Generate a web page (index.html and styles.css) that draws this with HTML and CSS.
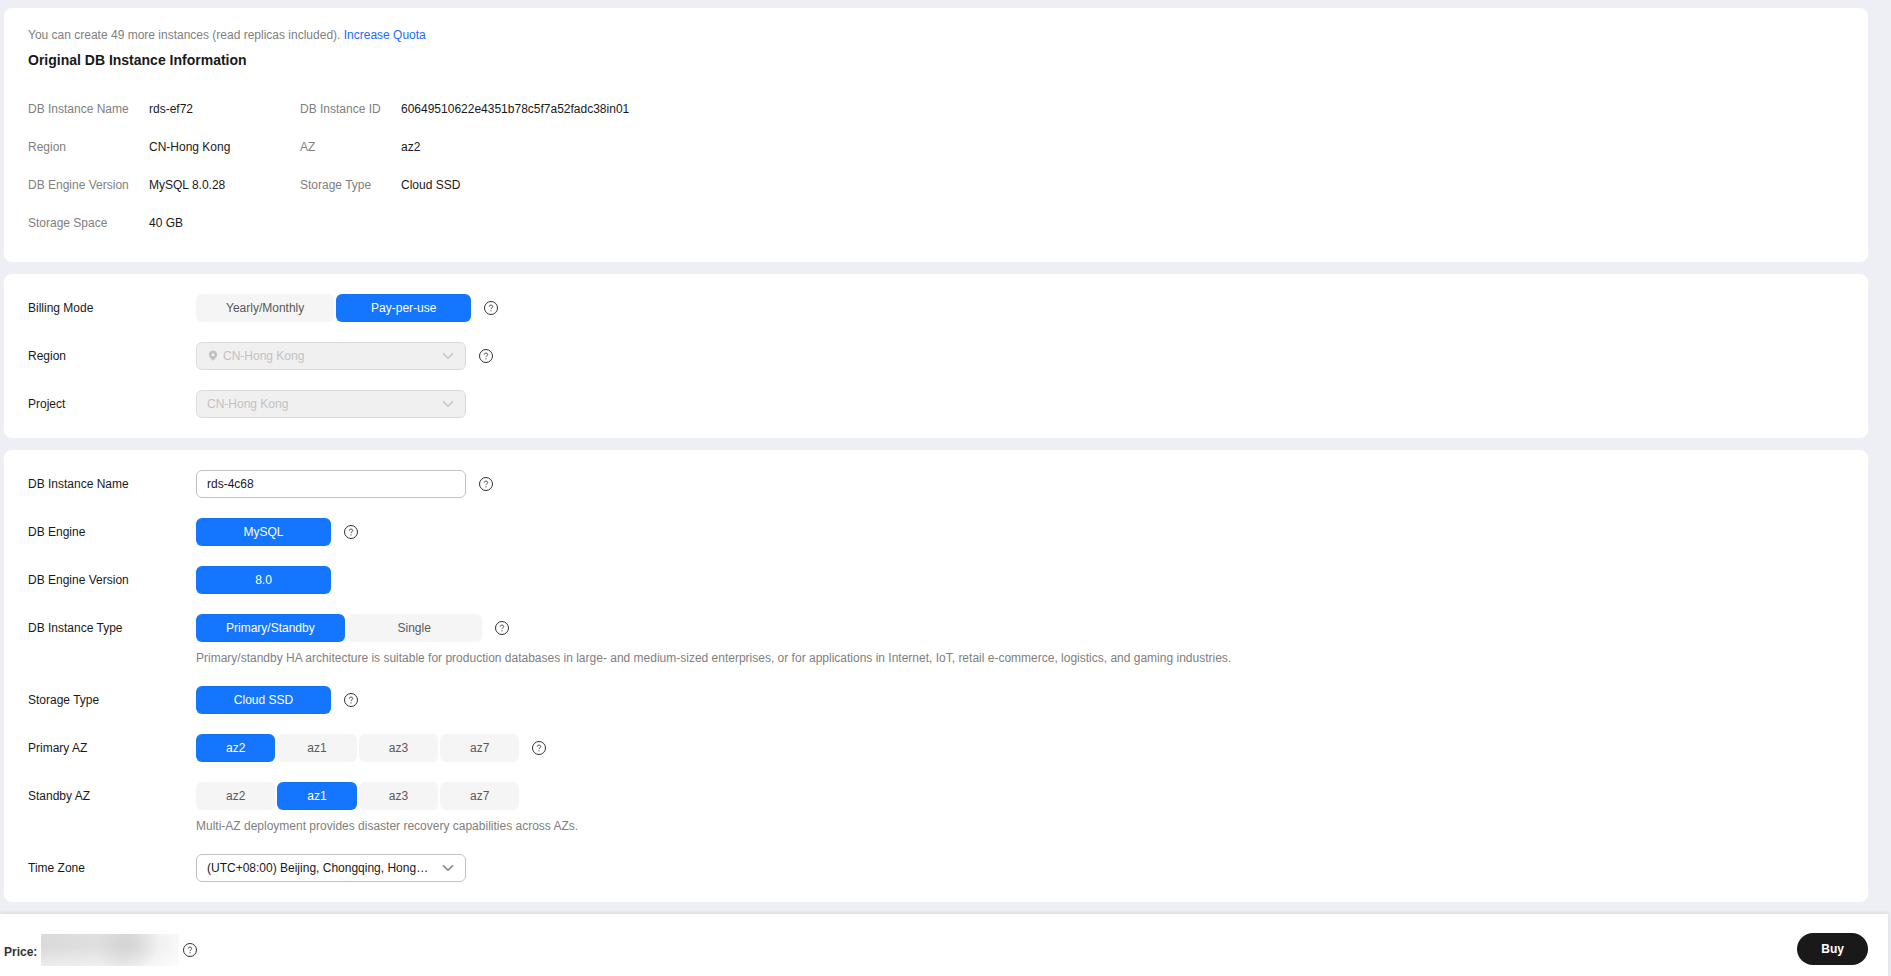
FILE: index.html
```html
<!DOCTYPE html>
<html lang="en">
  <head>
    <meta charset="UTF-8" />
    <meta name="viewport" content="width=device-width, initial-scale=1.0" />
    <title>Create Read Replica</title>
    <link rel="stylesheet" href="styles.css">
  </head>
  <body>
    <svg class="sprite" width="0" height="0" aria-hidden="true">
      <symbol id="icon-help" viewBox="0 0 14 14">
        <circle cx="7" cy="7" r="6.5" fill="none" stroke="currentColor" />
        <path d="M5.3 5.6C5.3 4.6 6 4.100 7 4.100s1.700.5 1.700 1.500c0 1.200-1.700 1.200-1.700 2.500" fill="none" stroke="currentColor" stroke-width="0.9" />
        <circle cx="7" cy="9.800" r="0.6" fill="currentColor" />
      </symbol>
      <symbol id="icon-arrow" viewBox="0 0 12 8">
        <path d="M1 1.2l5 5 5-5" fill="none" stroke="currentColor" stroke-width="1.5" />
      </symbol>
      <symbol id="icon-pin" viewBox="0 0 10 12">
        <path fill="currentColor" fill-rule="evenodd" d="M5 .6A4.2 4.2 0 0 0 .8 4.800C.8 7.300 3.500 9.500 5 10.800c1.500-1.300 4.200-3.500 4.200-6A4.200 4.200 0 0 0 5 .6zM5 3.300a1.500 1.500 0 1 1 0 3 1.500 1.500 0 0 1 0-3z" />
      </symbol>
    </svg>
    <main>
      <section class="card info">
        <p class="quota">You can create 49 more instances (read replicas included). <a href="#">Increase Quota</a></p>
        <h2>Original DB Instance Information</h2>
        <dl class="info-list">
          <dt>DB Instance Name</dt>
          <dd>rds-ef72</dd>
          <dt>DB Instance ID</dt>
          <dd>60649510622e4351b78c5f7a52fadc38in01</dd>
          <dt>Region</dt>
          <dd>CN-Hong Kong</dd>
          <dt>AZ</dt>
          <dd>az2</dd>
          <dt>DB Engine Version</dt>
          <dd>MySQL 8.0.28</dd>
          <dt>Storage Type</dt>
          <dd>Cloud SSD</dd>
          <dt>Storage Space</dt>
          <dd>40 GB</dd>
        </dl>
      </section>

      <section class="card form">
        <div class="form-row">
          <span class="label" id="billing-label">Billing Mode</span>
          <div class="control">
            <div class="options" role="group" aria-labelledby="billing-label">
              <button type="button" class="option">Yearly/Monthly</button>
              <button type="button" class="option active" aria-pressed="true">Pay-per-use</button>
            </div>
            <svg class="help"><use href="#icon-help" /></svg>
          </div>
        </div>
        <div class="form-row">
          <label class="label" for="region">Region</label>
          <div class="control">
            <div class="select with-pin">
              <svg class="pin"><use href="#icon-pin" /></svg>
              <select id="region" disabled>
                <option>CN-Hong Kong</option>
              </select>
              <svg class="arrow"><use href="#icon-arrow" /></svg>
            </div>
            <svg class="help"><use href="#icon-help" /></svg>
          </div>
        </div>
        <div class="form-row">
          <label class="label" for="project">Project</label>
          <div class="control">
            <div class="select">
              <select id="project" disabled>
                <option>CN-Hong Kong</option>
              </select>
              <svg class="arrow"><use href="#icon-arrow" /></svg>
            </div>
          </div>
        </div>
      </section>

      <section class="card form">
        <div class="form-row">
          <label class="label" for="name">DB Instance Name</label>
          <div class="control">
            <input type="text" id="name" name="name" value="rds-4c68" />
            <svg class="help"><use href="#icon-help" /></svg>
          </div>
        </div>
        <div class="form-row">
          <span class="label" id="engine-label">DB Engine</span>
          <div class="control">
            <div class="options" role="group" aria-labelledby="engine-label">
              <button type="button" class="option active" aria-pressed="true">MySQL</button>
            </div>
            <svg class="help"><use href="#icon-help" /></svg>
          </div>
        </div>
        <div class="form-row">
          <span class="label" id="version-label">DB Engine Version</span>
          <div class="control">
            <div class="options" role="group" aria-labelledby="version-label">
              <button type="button" class="option active" aria-pressed="true">8.0</button>
            </div>
          </div>
        </div>
        <div class="form-row">
          <span class="label" id="type-label">DB Instance Type</span>
          <div class="control">
            <div class="options" role="group" aria-labelledby="type-label">
              <button type="button" class="option active" aria-pressed="true">Primary/Standby</button>
              <button type="button" class="option">Single</button>
            </div>
            <svg class="help"><use href="#icon-help" /></svg>
          </div>
          <p class="hint">Primary/standby HA architecture is suitable for production databases in large- and medium-sized enterprises, or for applications in Internet, IoT, retail e-commerce, logistics, and gaming industries.</p>
        </div>
        <div class="form-row">
          <span class="label" id="storage-label">Storage Type</span>
          <div class="control">
            <div class="options" role="group" aria-labelledby="storage-label">
              <button type="button" class="option active" aria-pressed="true">Cloud SSD</button>
            </div>
            <svg class="help"><use href="#icon-help" /></svg>
          </div>
        </div>
        <div class="form-row">
          <span class="label" id="primary-label">Primary AZ</span>
          <div class="control">
            <div class="options small" role="group" aria-labelledby="primary-label">
              <button type="button" class="option active" aria-pressed="true">az2</button>
              <button type="button" class="option">az1</button>
              <button type="button" class="option">az3</button>
              <button type="button" class="option">az7</button>
            </div>
            <svg class="help"><use href="#icon-help" /></svg>
          </div>
        </div>
        <div class="form-row">
          <span class="label" id="standby-label">Standby AZ</span>
          <div class="control">
            <div class="options small" role="group" aria-labelledby="standby-label">
              <button type="button" class="option">az2</button>
              <button type="button" class="option active" aria-pressed="true">az1</button>
              <button type="button" class="option">az3</button>
              <button type="button" class="option">az7</button>
            </div>
          </div>
          <p class="hint">Multi-AZ deployment provides disaster recovery capabilities across AZs.</p>
        </div>
        <div class="form-row">
          <label class="label" for="timezone">Time Zone</label>
          <div class="control">
            <div class="select">
              <select id="timezone">
                <option>(UTC+08:00) Beijing, Chongqing, Hong Kong, Urumqi</option>
              </select>
              <svg class="arrow"><use href="#icon-arrow" /></svg>
            </div>
          </div>
        </div>
      </section>
    </main>

    <footer>
      <div class="price">
        <span class="price-label">Price:</span>
        <span class="price-value"></span>
        <svg class="help"><use href="#icon-help" /></svg>
      </div>
      <button type="button" class="buy-btn">Buy</button>
    </footer>
  </body>
</html>
```
FILE: styles.css
```css
* {
  box-sizing: border-box;
}

body {
  margin: 0;
  min-height: 100vh;
  display: flex;
  flex-direction: column;
  background-color: #eeeff5;
  color: #191919;
  font-family: "Liberation Sans", Arial, sans-serif;
  font-size: 12px;
  line-height: 20px;
}

h2,
p,
dl,
dd {
  margin: 0;
}

button,
input,
select {
  font: inherit;
  color: inherit;
}

.sprite {
  position: absolute;
}

main {
  display: flex;
  flex-direction: column;
  gap: 12px;
  padding: 8px 23px 12px 4px;
}

.card {
  background-color: #fff;
  border-radius: 8px;
  padding: 20px 24px;
}

.info {
  padding-top: 17px;
}

.quota {
  color: #808080;
}

.quota a {
  color: #1a6bff;
  text-decoration: none;
}

h2 {
  margin-top: 5px;
  font-size: 14px;
}

.info-list {
  display: grid;
  grid-template-columns: 121px 151px 101px 1fr;
  margin-top: 20px;
  line-height: 38px;
}

.info-list dt {
  color: #808080;
}

.form {
  display: flex;
  flex-direction: column;
  gap: 20px;
}

.form-row {
  display: grid;
  grid-template-columns: 168px 1fr;
}

.label {
  line-height: 28px;
}

.control {
  display: flex;
  align-items: center;
  gap: 13px;
}

.options {
  display: flex;
  gap: 2px;
}

.option {
  min-width: 135px;
  height: 28px;
  padding: 0 30px;
  border: none;
  border-radius: 6px;
  background-color: #f5f5f5;
  color: #595959;
  cursor: pointer;
}

.small .option {
  min-width: 0;
}

.option.active {
  background-color: #1476ff;
  color: #fff;
}

.hint {
  grid-column: 2;
  padding-top: 8px;
  line-height: 16px;
  color: #808080;
}

.help {
  flex: none;
  width: 14px;
  height: 14px;
  color: #333;
}

input,
select {
  display: block;
  width: 270px;
  height: 28px;
  padding: 0 10px;
  border: 1px solid #c2c2c2;
  border-radius: 6px;
  background-color: #fff;
}

.select {
  position: relative;
}

select {
  appearance: none;
  padding-right: 34px;
  text-overflow: ellipsis;
}

select:disabled {
  border-color: #dbdbdb;
  background-color: #f0f0f0;
  color: #c2c2c2;
  opacity: 1;
}

.arrow {
  position: absolute;
  top: 10px;
  right: 12px;
  width: 12px;
  height: 8px;
  color: #808080;
  pointer-events: none;
}

select:disabled + .arrow {
  color: #c2c2c2;
}

.pin {
  position: absolute;
  top: 8px;
  left: 12px;
  width: 10px;
  height: 12px;
  color: #c2c2c2;
}

.with-pin select {
  padding-left: 26px;
}

footer {
  flex: 1;
  display: flex;
  justify-content: space-between;
  align-items: flex-start;
  margin-right: 3px;
  padding: 19px 20px 10px 4px;
  background-color: #fff;
  box-shadow: 0 -1px 4px rgba(0, 0, 0, 0.1);
}

.price {
  display: flex;
  align-items: center;
  gap: 4px;
  padding-top: 1px;
}

.price-label {
  padding-top: 3px;
  font-weight: bold;
  color: #333;
}

.price-value {
  width: 138px;
  height: 32px;
  background: radial-gradient(ellipse 32px 30px at 62% 30%, rgba(208, 208, 208, 0.8), transparent),
    linear-gradient(to bottom, transparent 40%, rgba(255, 255, 255, 0.5)),
    linear-gradient(to right, #dadada, #e2e2e2 60%, #f9f9f9);
}

.buy-btn {
  height: 32px;
  padding: 0 24px;
  border: none;
  border-radius: 16px;
  background-color: #191919;
  color: #fff;
  font-weight: bold;
  cursor: pointer;
}
```
